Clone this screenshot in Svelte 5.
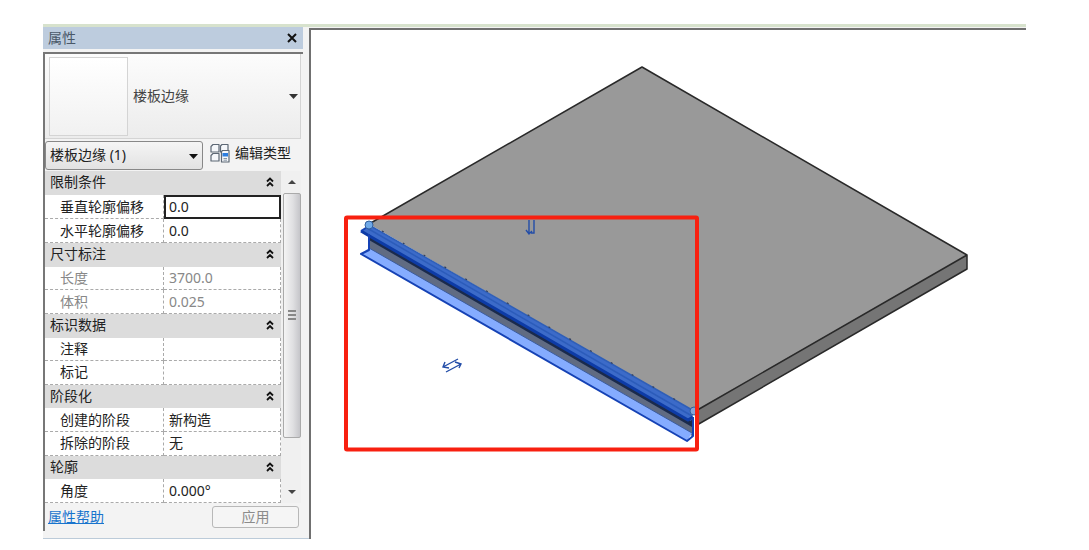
<script>
  const groups = [
    { name: '限制条件', rows: [
      { label: '垂直轮廓偏移', value: '0.0', active: true },
      { label: '水平轮廓偏移', value: '0.0' }
    ] },
    { name: '尺寸标注', rows: [
      { label: '长度', value: '3700.0', readonly: true },
      { label: '体积', value: '0.025', readonly: true }
    ] },
    { name: '标识数据', rows: [
      { label: '注释', value: '' },
      { label: '标记', value: '' }
    ] },
    { name: '阶段化', rows: [
      { label: '创建的阶段', value: '新构造' },
      { label: '拆除的阶段', value: '无' }
    ] },
    { name: '轮廓', rows: [{ label: '角度', value: '0.000°' }] }
  ];
</script>

<main class="window">
  <section class="panel">
    <header class="title">
      <span>属性</span>
      <button class="close" aria-label="关闭">
        <svg width="10" height="10" viewBox="0 0 10 10"><path d="M1 1L9 9M9 1L1 9" stroke="#111" stroke-width="2" /></svg>
      </button>
    </header>

    <div class="body">
      <button class="type">
        <span class="thumb"></span>
        <span class="type-name">楼板边缘</span>
        <svg width="9" height="5" viewBox="0 0 9 5"><path d="M0 0H9L4.500 5Z" fill="#333" /></svg>
      </button>

      <div class="filter">
        <div class="select-wrap">
          <select aria-label="选择过滤器"><option>楼板边缘 (1)</option></select>
          <svg class="select-arrow" width="9" height="5" viewBox="0 0 9 5"><path d="M0 0H9L4.500 5Z" fill="#111" /></svg>
        </div>
        <button class="edit-type">
          <svg width="20" height="20" viewBox="0 0 20 20">
            <g fill="#f5f7fa" stroke="#5d6875" stroke-width="1.200" stroke-linejoin="round">
              <path d="M3 1.500H9V9H1V3.500Z" />
              <path d="M12 1.500H18V9H10.500V3Z" />
              <path d="M3 10.500H9V18H1V12.500Z" />
              <path d="M12.500 7.500H19V19H11.500V8.500Z" />
            </g>
            <path d="M12.500 10H18V13.500H12.500Z" fill="#2d7ee0" />
            <path d="M13.500 15.500H17M13.500 17.200H17" stroke="#8794a2" />
          </svg>
          <span>编辑类型</span>
        </button>
      </div>

      <div class="list">
        <table>
          {#each groups as group}
            <tbody>
              <tr class="group">
                <th colspan="2">
                  <div class="group-head">
                    <span>{group.name}</span>
                    <button aria-label="折叠{group.name}">
                      <svg width="8" height="10" viewBox="0 0 8 10"><path d="M1 4.500L4 1.500L7 4.500M1 9L4 6L7 9" fill="none" stroke="#111" stroke-width="1.800" /></svg>
                    </button>
                  </div>
                </th>
              </tr>
              {#each group.rows as row}
                <tr class:readonly={row.readonly}>
                  <th class="label" scope="row">{row.label}</th>
                  <td class:active={row.active}>
                    <input type="text" aria-label={row.label} value={row.value} readonly={row.readonly} />
                  </td>
                </tr>
              {/each}
            </tbody>
          {/each}
        </table>
        <div class="scroll">
          <button aria-label="向上滚动"><svg width="8" height="4" viewBox="0 0 8 4"><path d="M0 4H8L4 0Z" fill="#444" /></svg></button>
          <div class="track">
            <div class="thumb-bar"><i></i><i></i><i></i></div>
          </div>
          <button aria-label="向下滚动"><svg width="8" height="4" viewBox="0 0 8 4"><path d="M0 0H8L4 4Z" fill="#444" /></svg></button>
        </div>
      </div>

      <footer>
        <a href="#help">属性帮助</a>
        <button class="apply" disabled>应用</button>
      </footer>
    </div>
  </section>

  <section class="view">
    <svg viewBox="311 30 715 508" preserveAspectRatio="xMinYMin meet" role="img" aria-label="三维视图">
      <!-- slab -->
      <path d="M642 67L967 255L694 412L369 224Z" fill="#999" />
      <path d="M967 255V269L697 425L694 411Z" fill="#757575" />
      <path d="M369 224L642 67L967 255V269L697 425M694 412L967 255" fill="none" stroke="#292929" stroke-width="1.500" stroke-linejoin="round" />
      <!-- slab edge profile -->
      <path d="M369 233L692 419V436L369 250Z" fill="#606b82" />
      <path d="M369 234L692 420V427L369 240Z" fill="#1a2a4c" />
      <path d="M369 248L692 433L687 441L361 254Z" fill="#85acff" />
      <path d="M369 248L692 433" stroke="#3c5c9c" stroke-width="1" />
      <path d="M369 225L694 411L691 421L361 231Z" fill="#3c6bc9" />
      <path d="M367 228L692 416" stroke="#2c5cba" stroke-width="1.500" />
      <path d="M361 231L366 234L688 420L693 417" fill="none" stroke="#0d3ba6" stroke-width="3" />
      <path d="M361 231L369 226M369 234V250L361 254L687 441L693 436V417" fill="none" stroke="#1542b5" stroke-width="2" stroke-linejoin="round" />
      <path d="M369 225L694 411" stroke="#2f5fb8" stroke-width="1.500" />
      <path d="M382 231L690 408" stroke="#303f60" stroke-width="1.200" stroke-dasharray="2 22" />
      <circle cx="369" cy="225" r="4" fill="#6fa9e8" stroke="#315f9e" />
      <circle cx="694" cy="411" r="4" fill="#83a5d9" stroke="#315f9e" />
      <!-- flip controls -->
      <g fill="none" stroke="#234da8" stroke-width="1.400">
        <path d="M529 220V234M526 230L529 234L532 231M534 220V233H531" />
        <path d="M458 359L443 367M445 362L443 367L449 368M446 372L461 364M455 362L461 364L459 368" />
      </g>
      <rect x="346" y="217.500" width="351" height="232" rx="1" fill="none" stroke="#f82010" stroke-width="4" />
    </svg>
  </section>
</main>

<style>
  :global(body) { margin: 0; background: #fff; }
  * { box-sizing: border-box; }
  .window {
    display: grid;
    grid-template-columns: 266px 1fr;
    margin: 24px 63px 12px 43px;
    border-top: 3px solid #d7e2cd;
    background: #f3f3f3;
    font: 14px/20px "Noto Sans", "Noto Sans CJK SC", sans-serif;
    color: #222;
  }
  button, input, select { font: inherit; color: inherit; margin: 0; padding: 0; border: 0; background: none; border-radius: 0; }
  .panel { padding-right: 6px; border-bottom: 1px solid #bccbd9; }
  .title {
    display: flex; align-items: center; justify-content: space-between;
    height: 22px; padding: 0 6px 0 5px; margin-bottom: 3px;
    background: #bdccde; color: #4a5868;
  }
  .close { display: flex; }
  .body { border-top: 2px solid #777; border-left: 2px solid #777; padding-right: 2px; margin-bottom: 7px; }
  .type {
    display: flex; align-items: center; width: 100%; height: 85px; padding: 0 2px 0 4px;
    border: solid #d4d4d4; border-width: 0 1px 1px 0;
    background: linear-gradient(#fcfcfc, #ececec); color: #444;
  }
  .thumb { width: 79px; height: 79px; border: 1px solid #d4d4d4; background: linear-gradient(#fff, #f1f1f1); }
  .type-name { flex: 1; padding-left: 5px; text-align: left; }
  .filter { display: flex; align-items: center; height: 32px; }
  .select-wrap { position: relative; width: 158px; }
  select {
    appearance: none; display: block; width: 100%; height: 29px; padding: 0 20px 0 4px;
    border: 1px solid #888; border-radius: 3px;
    background: linear-gradient(#f5f5f5, #e2e2e2);
  }
  .select-arrow { position: absolute; right: 5px; top: 13px; pointer-events: none; }
  .edit-type { display: flex; align-items: center; gap: 5px; padding: 0 0 4px 7px; }
  .list { display: flex; height: 332px; }
  table { flex: 1; height: 332px; border-collapse: separate; border-spacing: 0; table-layout: fixed; background: #fff; }
  th, td { padding: 0; font-weight: normal; text-align: left; line-height: 20px; border-bottom: 1px dashed #aaa; border-right: 1px dashed #aaa; }
  .group th { background: #dcdcdc; border-bottom: 1px solid #dcdcdc; border-right: 1px solid #dcdcdc; }
  .group-head { display: flex; align-items: center; justify-content: space-between; padding: 0 6px 0 5px; }
  .group-head button { display: flex; }
  th.label { width: 119px; padding-left: 15px; }
  td input { display: block; width: 100%; height: 20px; padding-left: 5px; outline: none; }
  td.active { border: 2px solid #222; }
  td.active input { height: 18px; padding-left: 3px; }
  .readonly { color: #888; }
  .scroll { display: flex; flex-direction: column; width: 20px; padding: 0 0 0 2px; background: #f0f0f0; }
  .scroll button { display: flex; align-items: center; justify-content: center; height: 22px; }
  .track { flex: 1; }
  .thumb-bar {
    display: flex; flex-direction: column; align-items: center; justify-content: center; gap: 2px;
    height: 85%; border: 1px solid #aaa; border-radius: 2px;
    background: linear-gradient(90deg, #f4f4f4, #e0e0e2 55%, #c5c5c9);
  }
  .thumb-bar i { width: 8px; height: 2px; background: #888; }
  footer { display: flex; align-items: center; justify-content: space-between; height: 28px; padding: 0 2px 0 3px; }
  a { color: #1874cd; text-decoration: underline; }
  .apply { width: 87px; height: 22px; line-height: 18px; border: 1px solid #b8b8b8; border-radius: 3px; background: #f5f5f5; color: #8b8b8b; }
  .view { border: solid #707070; border-width: 2px 0 0 2px; margin-top: 1px; background: #fff; }
  .view svg { display: block; width: 100%; height: auto; }
</style>
